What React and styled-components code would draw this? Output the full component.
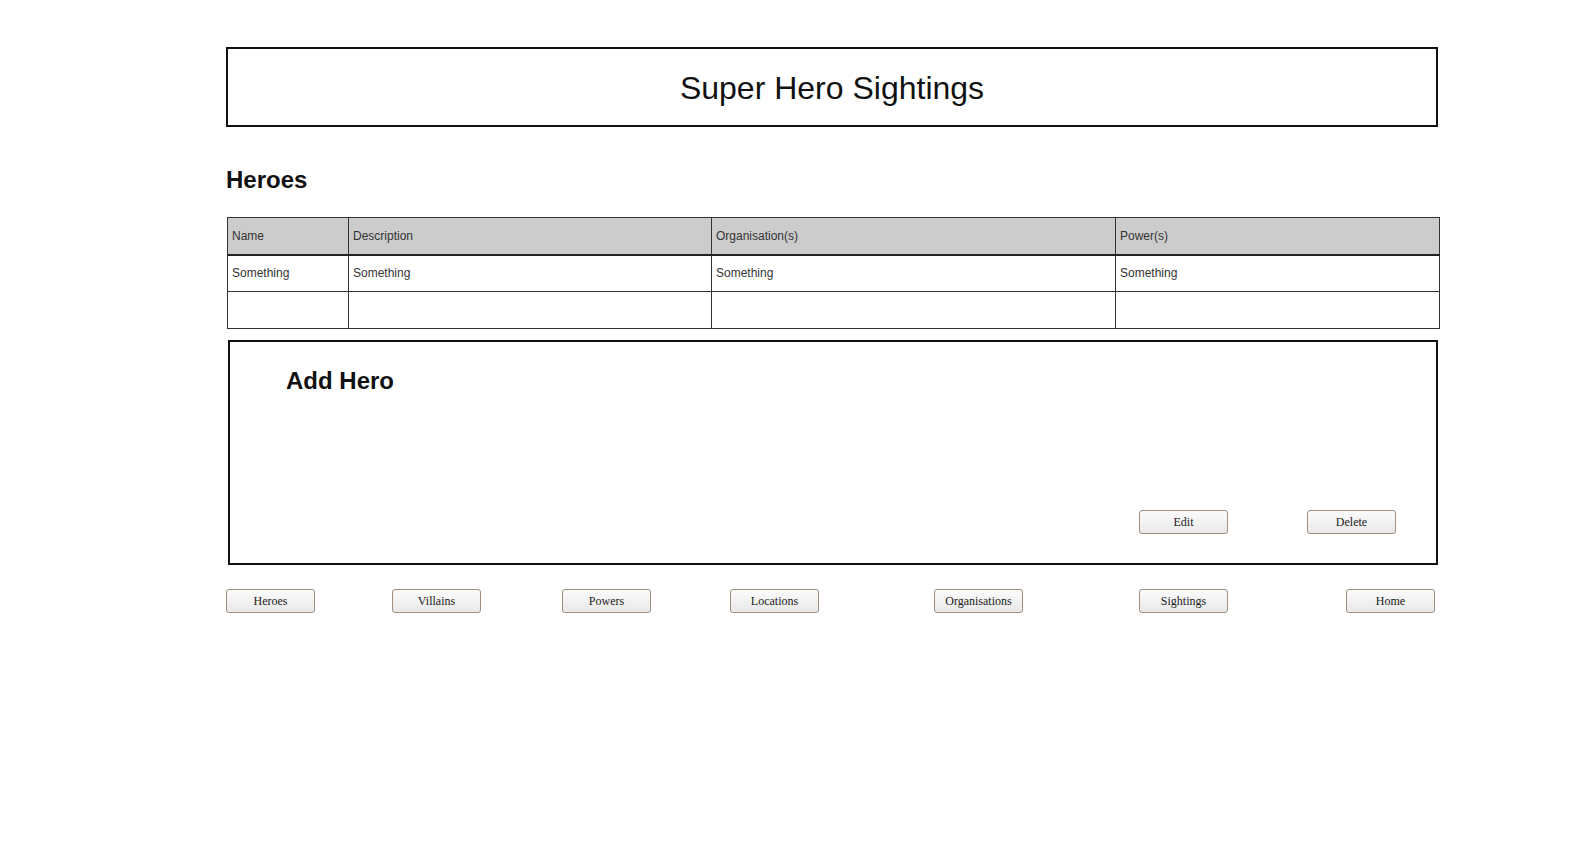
import React from "react";
import styled, { createGlobalStyle } from "styled-components";

const Global = createGlobalStyle`
  html, body { margin: 0; padding: 0; background: #ffffff; }
  body { font-family: "Liberation Sans", Arial, sans-serif; color: #111; }
`;

const Page = styled.div`
  width: 1212px;
  padding: 47px 0 0 226px;
  display: flex;
  flex-direction: column;
`;

const Header = styled.header`
  box-sizing: border-box;
  height: 80px;
  border: 2px solid #111;
  display: flex;
  align-items: center;
  justify-content: center;
`;

const Title = styled.h1`
  margin: 0;
  font-family: "Liberation Sans", Arial, sans-serif;
  font-weight: 400;
  font-size: 32px;
  line-height: 36px;
  color: #111;
  padding-top: 2px;
`;

const SectionTitle = styled.h2`
  margin: 39px 0 23px 0;
  font-family: "Liberation Sans", Arial, sans-serif;
  font-weight: 700;
  font-size: 24px;
  line-height: 28px;
  color: #111;
`;

const Table = styled.table`
  margin-left: 1px;
  width: 1212px;
  border-collapse: collapse;
  table-layout: fixed;
  border: 1px solid #222;
`;

const HeadCell = styled.th`
  box-sizing: border-box;
  width: ${(p) => p.$w}px;
  height: 37px;
  background: #cccccc;
  border: 1px solid #333;
  border-bottom: 2px solid #222;
  padding: 0 4px;
  text-align: left;
  font-weight: 400;
  font-family: "Liberation Sans", Arial, sans-serif;
  font-size: 12px;
  color: #333;
`;

const Cell = styled.td`
  box-sizing: border-box;
  height: 37px;
  border: 1px solid #333;
  padding: 0 4px;
  font-family: "Liberation Sans", Arial, sans-serif;
  font-size: 12px;
  color: #333;
`;

const FormBox = styled.section`
  box-sizing: border-box;
  margin: 11px 0 0 2px;
  width: 1210px;
  height: 225px;
  border: 2px solid #111;
  padding: 25px 0 0 56px;
  display: flex;
  flex-direction: column;
`;

const FormTitle = styled.h2`
  margin: 0;
  font-family: "Liberation Sans", Arial, sans-serif;
  font-weight: 700;
  font-size: 24px;
  line-height: 28px;
  color: #111;
`;

const ActionRow = styled.div`
  margin-top: auto;
  padding: 0 40px 29px 0;
  display: flex;
  justify-content: flex-end;
  gap: 79px;
`;

const Button = styled.button`
  box-sizing: border-box;
  width: 89px;
  height: 24px;
  margin-left: ${(p) => p.$offset || 0}px;
  padding: 0;
  border: 1px solid #9e8e7e;
  border-radius: 3px;
  background: linear-gradient(#fbfbfb, #e9e9e9);
  font-family: "Liberation Serif", "Times New Roman", serif;
  font-size: 12px;
  color: #1a1a1a;
  cursor: pointer;
  flex: none;
`;

const Nav = styled.nav`
  margin-top: 24px;
  display: flex;
`;

const columns = [
  { label: "Name", w: 121 },
  { label: "Description", w: 363 },
  { label: "Organisation(s)", w: 404 },
  { label: "Power(s)", w: 324 },
];

const navItems = [
  { label: "Heroes", offset: 0 },
  { label: "Villains", offset: 77 },
  { label: "Powers", offset: 81 },
  { label: "Locations", offset: 79 },
  { label: "Organisations", offset: 115 },
  { label: "Sightings", offset: 116 },
  { label: "Home", offset: 118 },
];

export default function App() {
  return (
    <>
      <Global />
      <Page>
        <Header>
          <Title>Super Hero Sightings</Title>
        </Header>
        <SectionTitle>Heroes</SectionTitle>
        <Table>
          <thead>
            <tr>
              {columns.map((c) => (
                <HeadCell key={c.label} $w={c.w}>
                  {c.label}
                </HeadCell>
              ))}
            </tr>
          </thead>
          <tbody>
            <tr>
              {columns.map((c) => (
                <Cell key={c.label}>Something</Cell>
              ))}
            </tr>
            <tr>
              {columns.map((c) => (
                <Cell key={c.label} />
              ))}
            </tr>
          </tbody>
        </Table>
        <FormBox>
          <FormTitle>Add Hero</FormTitle>
          <ActionRow>
            <Button>Edit</Button>
            <Button>Delete</Button>
          </ActionRow>
        </FormBox>
        <Nav>
          {navItems.map((n) => (
            <Button key={n.label} $offset={n.offset}>
              {n.label}
            </Button>
          ))}
        </Nav>
      </Page>
    </>
  );
}
